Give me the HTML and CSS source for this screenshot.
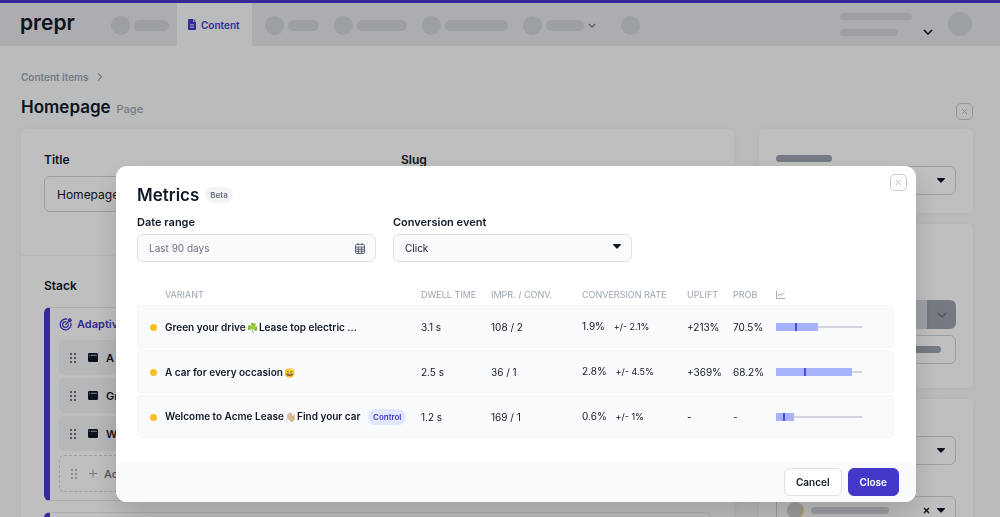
FILE: index.html
```html
<!DOCTYPE html>
<html lang="en">
<head>
<meta charset="utf-8">
<meta name="viewport" content="width=device-width, initial-scale=1">
<title>Homepage - Metrics</title>
<link rel="stylesheet" href="styles.css">
</head>
<body>
<svg class="sprite" aria-hidden="true">
  <symbol id="i-x" viewBox="0 0 7 7"><path d="M1 1l5 5M6 1L1 6" fill="none" stroke="currentColor"/></symbol>
  <symbol id="i-chevron" viewBox="0 0 10 6"><path d="M1 1l4 4 4-4" fill="none" stroke="currentColor" stroke-width="1.5"/></symbol>
  <symbol id="i-caret" viewBox="0 0 8 5"><path d="M.6 0h6.8c.6 0 .8.6.4 1L4.5 4.6a.7.7 0 0 1-1 0L.2 1C-.2.6 0 0 .6 0z" fill="currentColor"/></symbol>
  <symbol id="i-grip" viewBox="0 0 7 10"><path d="M0 0h2v2H0zM4 0h2v2H4zM0 4h2v2H0zM4 4h2v2H4zM0 8h2v2H0zM4 8h2v2H4z" fill="currentColor"/></symbol>
  <symbol id="i-window" viewBox="0 0 10 9"><rect width="10" height="9" rx="1.2" fill="currentColor"/><path d="M1.2 2.3h1M3 2.3h5.8" stroke="#d1d5db" stroke-width=".8"/></symbol>
</svg>

<div class="page">
  <header class="topbar">
    <div class="logo">prepr</div>
    <nav class="nav">
      <div class="nav-item"><span class="dot"></span><span class="pill w35"></span></div>
      <a class="nav-tab" href="#">
        <svg width="8" height="11" viewBox="0 0 8 11"><path d="M1 0h4v3h3v7a1 1 0 0 1-1 1H1a1 1 0 0 1-1-1V1a1 1 0 0 1 1-1z" fill="currentColor"/><path d="M5.6 0L8 2.4H5.6z" fill="currentColor"/><path d="M2 5.5h4M2 7h4M2 8.5h4" stroke="#e5e7eb" stroke-width=".7"/></svg>
        Content
      </a>
      <div class="nav-item"><span class="dot"></span><span class="pill w31"></span></div>
      <div class="nav-item"><span class="dot"></span><span class="pill w50"></span></div>
      <div class="nav-item"><span class="dot"></span><span class="pill w63"></span></div>
      <div class="nav-item"><span class="dot"></span><span class="pill w38"></span><svg class="muted" width="8" height="5"><use href="#i-chevron"/></svg></div>
      <div class="nav-item"><span class="dot"></span></div>
    </nav>
    <div class="account">
      <div class="account-lines"><span class="line w72"></span><span class="line w58"></span></div>
      <svg class="account-chevron" width="10" height="6"><use href="#i-chevron"/></svg>
      <span class="avatar"></span>
    </div>
  </header>

  <main class="main">
    <nav class="breadcrumb"><a href="#">Content items</a><svg width="6" height="8" viewBox="0 0 6 8"><path d="M1 .5L4.7 4 1 7.5" fill="none" stroke="currentColor" stroke-width="1.2"/></svg></nav>
    <div class="heading">
      <h1>Homepage</h1><span class="heading-type">Page</span>
      <button class="icon-btn heading-close" aria-label="Close item"><svg width="7" height="7"><use href="#i-x"/></svg></button>
    </div>
    <div class="columns">
      <section class="panel editor">
        <div class="form-row">
          <div class="form-cell"><label for="title">Title</label><input id="title" value="Homepage"></div>
          <div class="form-cell"><label for="slug">Slug</label><input id="slug"></div>
        </div>
        <div class="stack">
          <h2>Stack</h2>
          <div class="stack-card">
            <div class="stack-title">
              <svg width="13" height="13" viewBox="0 0 13 13" fill="none" stroke="currentColor" stroke-width="1.3"><path d="M8.3 1.3A5.4 5.4 0 1 0 11.8 5"/><path d="M7.3 3.8A2.9 2.9 0 1 0 9.3 6"/><path d="M6.4 6.8L10 3.2M9.6 3.6V1.8L11 .6v1.6h1.5L11.2 3.6z"/></svg>
              Adaptive content
            </div>
            <div class="stack-item"><svg class="grip" width="7" height="10"><use href="#i-grip"/></svg><svg width="10" height="9"><use href="#i-window"/></svg>A car for every occasion</div>
            <div class="stack-item"><svg class="grip" width="7" height="10"><use href="#i-grip"/></svg><svg width="10" height="9"><use href="#i-window"/></svg>Green your drive</div>
            <div class="stack-item"><svg class="grip" width="7" height="10"><use href="#i-grip"/></svg><svg width="10" height="9"><use href="#i-window"/></svg>Welcome to Acme Lease</div>
            <div class="stack-item stack-add"><svg class="grip" width="7" height="10"><use href="#i-grip"/></svg><svg class="plus" width="10" height="9" viewBox="0 0 10 9"><path d="M5 .5v8M1 4.5h8" stroke="currentColor"/></svg>Add</div>
          </div>
          <div class="stack-card"></div>
        </div>
      </section>
      <aside class="side">
        <section class="panel side-panel">
          <span class="bar w56"></span>
          <button class="fake-select" aria-label="Select"><svg width="8" height="5"><use href="#i-caret"/></svg></button>
        </section>
        <section class="panel side-panel side-actions">
          <div class="split"><button class="split-main" aria-label="Action"></button><button class="split-more" aria-label="More actions"><svg width="10" height="6"><use href="#i-chevron"/></svg></button></div>
          <button class="fake-select" aria-label="Secondary action"><span class="bar w56"></span></button>
        </section>
        <section class="panel side-panel">
          <span class="bar w56"></span>
          <button class="fake-select" aria-label="Select"><svg width="8" height="5"><use href="#i-caret"/></svg></button>
          <button class="fake-select assignee" aria-label="Assignee"><span class="face"></span><span class="bar light w78"></span><svg class="clear" width="7" height="7"><use href="#i-x"/></svg><svg width="8" height="5"><use href="#i-caret"/></svg></button>
        </section>
      </aside>
    </div>
  </main>
</div>

<div class="overlay">
  <div class="modal" role="dialog" aria-modal="true" aria-labelledby="metrics-title">
    <button class="icon-btn modal-close" aria-label="Close dialog"><svg width="7" height="7"><use href="#i-x"/></svg></button>
    <div class="modal-body">
      <div class="modal-head"><h2 id="metrics-title">Metrics</h2><span class="badge beta">Beta</span></div>
      <div class="filters">
        <div class="field">
          <label for="range">Date range</label>
          <div class="control">
            <input id="range" placeholder="Last 90 days">
            <svg class="control-icon" width="10" height="11" viewBox="0 0 10 11" fill="none" stroke="#4b5563" stroke-width=".9"><rect x=".5" y="1.5" width="9" height="9" rx="1.3"/><path d="M.5 4h9M.5 6.2h9M.5 8.3h9M3.4 4v6.5M6.6 4v6.5M3 0v2M7 0v2"/></svg>
          </div>
        </div>
        <div class="field">
          <label for="event">Conversion event</label>
          <div class="control">
            <select id="event"><option>Click</option></select>
            <svg class="control-icon caret" width="8" height="5"><use href="#i-caret"/></svg>
          </div>
        </div>
      </div>
      <table class="metrics">
        <colgroup><col class="c-name"><col class="c-dwell"><col class="c-impr"><col class="c-rate"><col class="c-uplift"><col class="c-prob"><col></colgroup>
        <thead>
          <tr><th>Variant</th><th>Dwell time</th><th>Impr. / Conv.</th><th>Conversion rate</th><th>Uplift</th><th>Prob</th>
          <th aria-label="Chart"><svg width="9" height="8" viewBox="0 0 9 8" fill="none" stroke="currentColor" stroke-width=".9"><path d="M.5 0v7.5H9M2 5l2-2 1.5 1.3L8.3 1.5"/></svg></th></tr>
        </thead>
        <tbody>
          <tr><td>Green your drive <span class="emoji">☘️</span> Lease top electric ...</td><td>3.1 s</td><td>108 / 2</td><td>1.9% <small>+/- 2.1%</small></td><td>+213%</td><td>70.5%</td>
          <td><div class="range"><span class="range-fill" style="width:49%"></span><span class="range-tick" style="left:22%"></span></div></td></tr>
          <tr><td>A car for every occasion <span class="emoji">😀</span></td><td>2.5 s</td><td>36 / 1</td><td>2.8% <small>+/- 4.5%</small></td><td>+369%</td><td>68.2%</td>
          <td><div class="range"><span class="range-fill" style="width:88%"></span><span class="range-tick" style="left:33%"></span></div></td></tr>
          <tr><td>Welcome to Acme Lease <span class="emoji">👋🏼</span> Find your car <span class="badge control-badge">Control</span></td><td>1.2 s</td><td>169 / 1</td><td>0.6% <small>+/- 1%</small></td><td>-</td><td>-</td>
          <td><div class="range"><span class="range-fill" style="width:21%"></span><span class="range-tick" style="left:8%"></span></div></td></tr>
        </tbody>
      </table>
    </div>
    <div class="modal-foot"><button class="btn">Cancel</button><button class="btn primary">Close</button></div>
  </div>
</div>
</body>
</html>
```

FILE: styles.css
```css
* { box-sizing: border-box; }

body {
  margin: 0;
  height: 100vh;
  overflow: hidden;
  background: #f9fafb;
  color: #111827;
  font: 10px/16px Inter, "Noto Color Emoji", sans-serif;
}

h1, h2 { margin: 0; font-weight: 600; }
button, input, select { font: inherit; color: inherit; margin: 0; }
a { color: inherit; text-decoration: none; }
svg { display: block; flex: none; }
.sprite { display: none; }
.page { height: 100vh; overflow: hidden; }

/* Top bar */
.topbar {
  display: flex;
  height: 46px;
  border-top: 3px solid #4338ca;
  background: #e5e7eb;
  padding: 0 28px 0 20px;
}
.logo { width: 91px; font-size: 21px; line-height: 40px; font-weight: 600; }
.nav { display: flex; align-items: stretch; gap: 15px; flex: 1; }
.nav-item { display: flex; align-items: center; gap: 4px; padding-top: 1px; }
.nav-tab {
  display: flex;
  align-items: center;
  gap: 5px;
  margin: 0 -2px 0 -7px;
  padding: 0 12px 0 11px;
  background: #f9fafb;
  color: #4338ca;
  font-weight: 600;
}
.dot { width: 19px; height: 19px; border-radius: 50%; background: #d1d5db; }
.pill { height: 11px; border-radius: 6px; background: #d1d5db; }
.muted { color: #6b7280; margin-right: 10px; }
.w31 { width: 31px; }
.w35 { width: 35px; }
.w38 { width: 38px; }
.w50 { width: 50px; }
.w56 { width: 56px; }
.w58 { width: 58px; }
.w63 { width: 63px; }
.w72 { width: 72px; }
.w78 { width: 78px; }
.account { display: flex; align-items: center; padding-bottom: 1px; }
.account-lines { display: flex; flex-direction: column; gap: 9px; width: 83px; }
.line { height: 7px; border-radius: 4px; background: #d1d5db; }
.account-chevron { margin: 16px 15px 0 0; }
.avatar { width: 24px; height: 24px; border-radius: 50%; background: #d1d5db; }

/* Page */
.main { padding: 23px 27px 0 21px; }
.breadcrumb { display: flex; align-items: center; gap: 8px; color: #9ca3af; font-weight: 600; }
.heading { display: flex; align-items: baseline; gap: 6px; padding: 9px 0; }
.heading h1 { font-size: 17px; line-height: 26px; }
.heading-type { color: #9ca3af; font-size: 11px; font-weight: 500; }
.heading-close { margin-left: auto; align-self: flex-end; }
.icon-btn {
  display: grid;
  place-items: center;
  width: 17px;
  height: 17px;
  padding: 0;
  border: 1px solid #c5cad2;
  border-radius: 5px;
  background: transparent;
  color: #c0c5ce;
}
.columns { display: grid; grid-template-columns: 1fr 214px; gap: 25px; align-items: start; }
.panel { background: #fff; border-radius: 5px; box-shadow: 0 0 6px #eef0f3; }
.form-row {
  display: grid;
  grid-template-columns: 1fr 1fr;
  gap: 47px;
  padding: 23px 23px 43px;
  border-bottom: 1px solid #f3f4f6;
}
.form-cell label, .stack h2 { display: block; font-size: 12px; line-height: 16px; font-weight: 600; }
.form-cell input {
  width: 100%;
  height: 36px;
  margin-top: 8px;
  padding: 0 12px;
  border: 1px solid #d1d5db;
  border-radius: 6px;
  background: #fff;
  font-size: 12px;
}
.stack { padding: 22px 23px; }
.stack-card {
  min-height: 90px;
  margin-top: 13px;
  padding: 8px 8px 8px 9px;
  border: 1px solid #e5e7eb;
  border-left: 6px solid #4338ca;
  border-radius: 6px;
}
.stack-card + .stack-card { margin-top: 11px; }
.stack-title { display: flex; align-items: center; gap: 5px; margin: 0 0 8px; color: #4338ca; font-size: 11px; font-weight: 600; }
.stack-item {
  display: flex;
  align-items: center;
  gap: 8px;
  height: 35px;
  margin-bottom: 3px;
  padding-left: 11px;
  border-radius: 5px;
  background: #f3f4f6;
  font-size: 11px;
  font-weight: 600;
}
.grip { margin-right: 3px; color: #6b7280; }
.stack-add { gap: 6px; height: 37px; margin: 4px 0 0; border: 1px dashed #d1d5db; background: none; color: #6b7280; font-weight: 500; }
.stack-add .grip { margin-right: 4px; color: #b6bbc4; }
.plus { color: #9ca3af; }

.side { display: grid; gap: 11px; }
.side-panel { display: flex; flex-direction: column; padding: 26px 17px 18px; }
.bar { height: 7px; border-radius: 4px; background: #9ca3af; }
.bar.light { background: #d1d5db; }
.side-panel > .fake-select { margin-top: 4px; }
.fake-select {
  display: flex;
  flex: none;
  align-items: center;
  justify-content: flex-end;
  width: 100%;
  height: 29px;
  padding: 0 10px;
  border: 1px solid #d1d5db;
  border-radius: 6px;
  background: #fff;
}
.side-actions { padding-top: 76px; padding-bottom: 24px; }
.side-actions > .fake-select { margin-top: 6px; padding: 0 14px; }
.split { display: flex; height: 29px; border-radius: 6px; overflow: hidden; }
.split button { border: 0; padding: 0; }
.split-main { flex: 1; background: #d1d5db; }
.split-more { display: grid; place-items: center; width: 29px; background: #9ca3af; }
.split-more svg { color: #6b7280; }
.side-panel > .assignee { margin-top: 31px; gap: 7px; }
.face { width: 17px; height: 17px; border-radius: 50%; background: #d6d3d1; border-right: 1px solid #fde047; }
.clear { margin-left: auto; stroke-width: 1.4; }

/* Modal */
.overlay {
  position: fixed;
  inset: 0;
  display: flex;
  justify-content: center;
  align-items: flex-end;
  padding: 15px 0 15px 32px;
  background: rgba(0, 0, 0, .25);
}
.modal {
  position: relative;
  width: 800px;
  max-width: 96%;
  border-radius: 11px;
  overflow: hidden;
  background: #fff;
  box-shadow: 0 14px 28px rgba(0, 0, 0, .16);
}
.modal-close { position: absolute; top: 8px; right: 9px; }
.modal-body { padding: 20px 22px 23px 21px; }
.modal-head { display: flex; align-items: center; gap: 6px; }
.modal-head h2 { font-size: 17px; line-height: 18px; }
.badge { display: inline-block; padding: 0 5px; border-radius: 8px; font-size: 8px; line-height: 16px; font-weight: 600; }
.beta { background: #f3f4f6; color: #6b7280; }
.filters { display: flex; gap: 17px; padding: 10px 0 23px; }
.field { width: 239px; }
.field label { display: block; margin-bottom: 4px; font-size: 11px; font-weight: 600; }
.control { display: grid; align-items: center; }
.control > * { grid-area: 1 / 1; }
.control input, .control select {
  width: 100%;
  height: 28px;
  padding: 0 11px;
  border: 1px solid #dfe1e6;
  border-radius: 6px;
  background: #f9fafb;
  appearance: none;
}
.control input::placeholder { color: #6b7280; }
.control-icon { justify-self: end; margin-right: 11px; pointer-events: none; }
.caret { margin-bottom: 3px; }

.metrics {
  width: 100%;
  table-layout: fixed;
  border-collapse: separate;
  border-spacing: 0 2px;
}
.c-name { width: 284px; }
.c-dwell { width: 70px; }
.c-impr { width: 91px; }
.c-rate { width: 105px; }
.c-uplift { width: 46px; }
.c-prob { width: 43px; }
.metrics th, .metrics td { padding: 0; text-align: left; white-space: nowrap; }
.metrics th { height: 16px; color: #9ca3af; font-size: 9px; line-height: 16px; font-weight: 400; text-transform: uppercase; }
.metrics td {
  height: 43px;
  border: solid #f5f6f8;
  border-width: 1px 0;
  background: #f9fafb;
}
.metrics td:first-child { border-left-width: 1px; border-radius: 4px 0 0 4px; font-weight: 600; }
.metrics td:last-child { border-right-width: 1px; border-radius: 0 4px 4px 0; }
.metrics th:first-child { padding-left: 28px; }
.metrics td:first-child::before {
  content: "";
  display: inline-block;
  width: 7px;
  height: 7px;
  margin: 0 8px 0 12px;
  border-radius: 50%;
  background: #fbbf24;
  vertical-align: middle;
}
.metrics small { margin-left: 6px; font-size: 9px; }
.emoji { margin: 0 -2px 0 -1px; font-size: 9px; line-height: 12px; }
.control-badge { margin-left: 5px; background: #e0e7ff; color: #4338ca; }
.range {
  position: relative;
  width: 86px;
  height: 8px;
  background: linear-gradient(#d1d5db, #d1d5db) center / 100% 2px no-repeat;
}
.range-fill { display: block; height: 8px; background: #a5b4fc; }
.range-tick { position: absolute; top: 0; width: 2px; height: 8px; background: #4f46e5; }

.modal-foot {
  display: flex;
  justify-content: flex-end;
  gap: 6px;
  padding: 5px 17px 6px;
  background: #f9fafb;
}
.btn {
  height: 28px;
  padding: 0 11px;
  border: 1px solid #dfe1e6;
  border-radius: 6px;
  background: #fff;
  font-weight: 600;
}
.primary { border-color: #4338ca; background: #4338ca; color: #fff; }
```
